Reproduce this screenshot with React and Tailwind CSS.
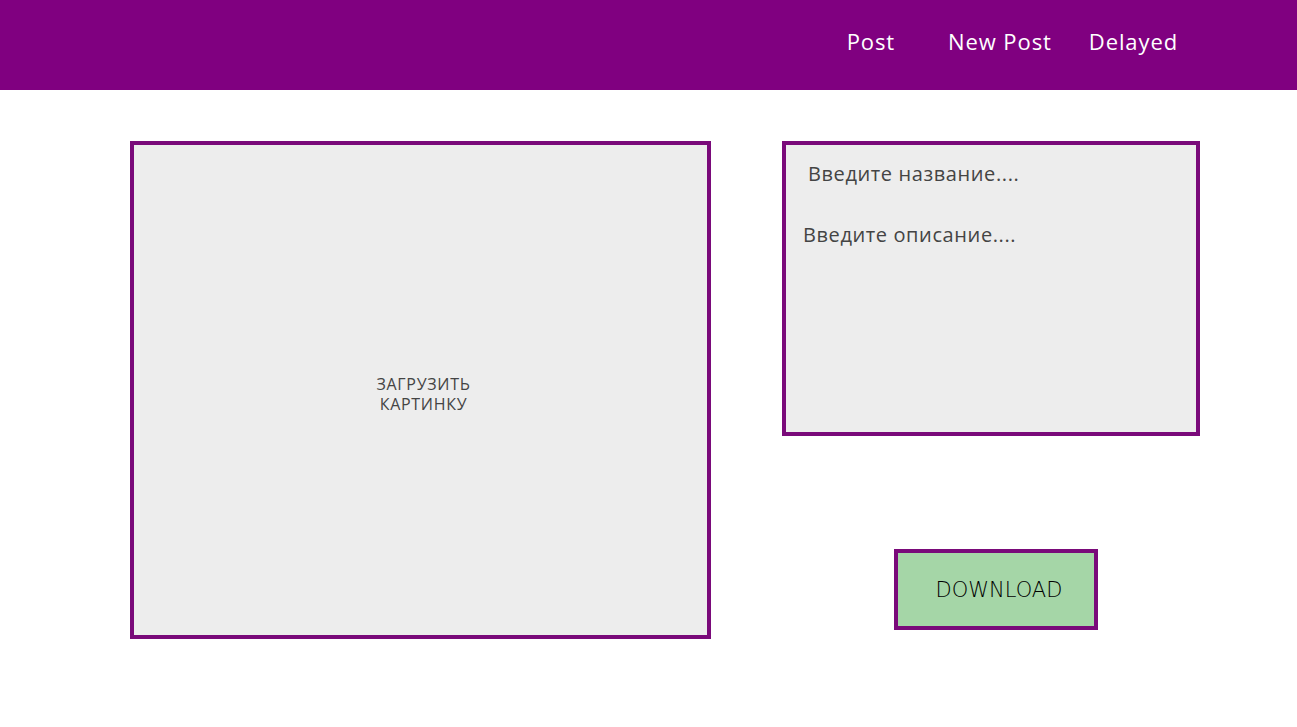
import React from "react";

export default function App() {
  const font = { fontFamily: '"Open Sans", "DejaVu Sans", sans-serif' };
  return (
    <div className="w-[1297px] min-h-[727px] bg-white" style={font}>
      <header className="h-[90px] bg-[#800080] flex items-center">
        <nav className="ml-auto mr-[119px] flex items-center text-white text-[22px] tracking-[0.9px] pb-[8px]">
          <a className="mr-[53px]">Post</a>
          <a className="mr-[37px]">New Post</a>
          <a>Delayed</a>
        </nav>
      </header>
      <main className="flex pl-[130px] pt-[51px] gap-[71px]">
        <div className="w-[581px] h-[498px] border-4 border-[#7a0a7a] bg-[#ededed] flex items-center justify-center">
          <div className="text-center text-[16px] tracking-[0.7px] leading-[20px] text-[#444] uppercase pt-[8px] pl-[6px]">
            Загрузить
            <br />
            картинку
          </div>
        </div>
        <div className="flex flex-col w-[418px]">
          <div className="h-[295px] border-4 border-[#7a0a7a] bg-[#ededed] flex flex-col">
            <input
              className="mt-[14px] ml-[22px] mr-[10px] bg-transparent outline-none text-[20px] tracking-[0.6px] text-[#333] placeholder:text-[#444]"
              placeholder="Введите название...."
            />
            <textarea
              className="mt-[31px] ml-[17px] mr-[10px] flex-1 bg-transparent outline-none resize-none text-[20px] tracking-[0.6px] text-[#333] placeholder:text-[#444]"
              placeholder="Введите описание...."
            />
          </div>
          <button
            className="mt-[113px] ml-[112px] w-[204px] h-[81px] border-4 border-[#7a0a7a] bg-[#a5d6a7] text-black text-[21px] flex items-center justify-center pl-[6px] pt-[3px]"
            style={{ fontFamily: '"DejaVu Sans", sans-serif', fontWeight: 300 }}
          >
            DOWNLOAD
          </button>
        </div>
      </main>
    </div>
  );
}
